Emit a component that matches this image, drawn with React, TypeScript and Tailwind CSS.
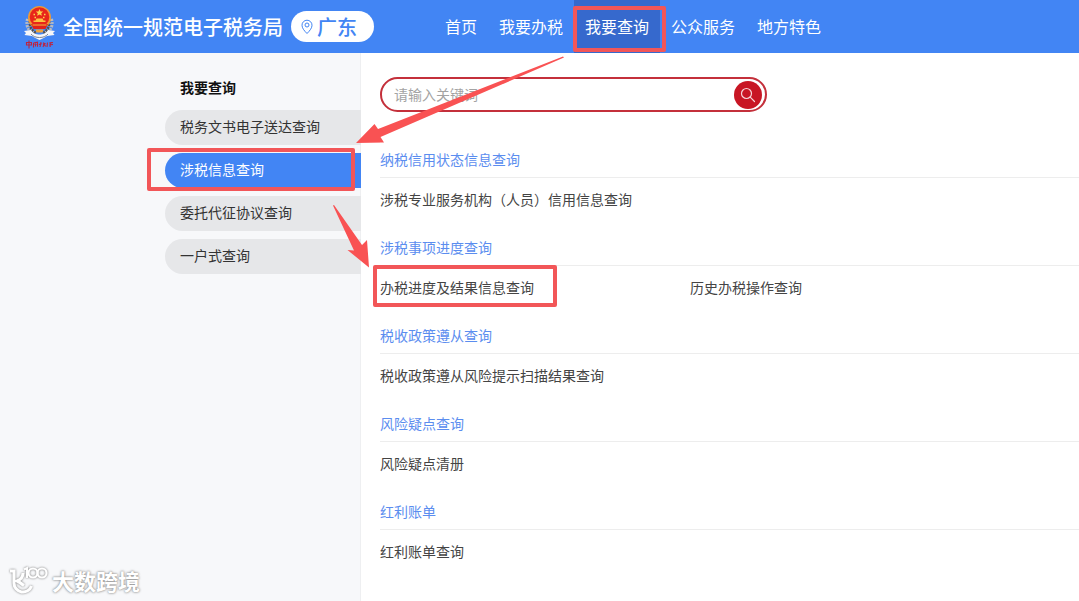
import clsx from "clsx";

const navItems = ["首页", "我要办税", "我要查询", "公众服务", "地方特色"];

const menuItems = ["税务文书电子送达查询", "涉税信息查询", "委托代征协议查询", "一户式查询"];

const sections = [
  { title: "纳税信用状态信息查询", links: ["涉税专业服务机构（人员）信用信息查询"] },
  { title: "涉税事项进度查询", links: ["办税进度及结果信息查询", "历史办税操作查询"] },
  { title: "税收政策遵从查询", links: ["税收政策遵从风险提示扫描结果查询"] },
  { title: "风险疑点查询", links: ["风险疑点清册"] },
  { title: "红利账单", links: ["红利账单查询"] },
];

function Emblem() {
  return (
    <svg width="32" height="44" viewBox="0 0 32 44" fill="none" className="shrink-0">
      <path d="M5 14c-2 7 1 12 7 15M28 14c2 7-1 12-7 15" stroke="#b9bbc0" strokeWidth="4" strokeDasharray="2 1" />
      <path d="M7 16c-1 6 2 10 6 12M26 16c1 6-2 10-6 12" stroke="#55504e" strokeWidth="2.500" strokeDasharray="2 1" />
      <circle cx="16.500" cy="12.500" r="11.500" fill="#f09a35" />
      <circle cx="16.500" cy="12" r="9.800" fill="#e8251a" />
      <path d="M16.500 4l1.100 2.400 2.600.2-2 1.700.7 2.500-2.400-1.300-2.400 1.300.7-2.500-2-1.700 2.600-.2z" fill="#fbd34b" />
      <path d="M10.500 9.500h1.500M21 9.500h1.500M11.500 12.500H13M20 12.500h1.500" stroke="#fbd34b" strokeWidth="1.400" />
      <path d="M10.500 17h12v-1.500h-2l-1-2h-6l-1 2h-2z" fill="#fbc33f" />
      <path d="M8 19h17l-2.500 5h-12z" fill="#e0211b" />
      <path d="M9.500 20h14" stroke="#f7bd3c" strokeWidth="1" />
      <path d="M12.500 24.500h8l-1 3h-6z" fill="#f0a338" />
      <path d="M1 26l7-1c2 3.500 5 4.500 8.500 4.500S23 28.500 25 25l7 1-2 2 1.500 2-7.500 1c-2 1.500-4.500 2.800-7.500 4-3-1.200-5.500-2.500-7.500-4l-7.500-1L3 28z" fill="#f6f6f8" />
      <path d="M8 29c2 2.500 5 3.500 8.500 3.500S23 31.500 25 29" stroke="#7d8597" strokeWidth="1" />
      <path
        d="M3.500 37.500h5v2.500h-5zM6 35.500v8M10.500 38v4.500M10.500 38l4-.8v4.500M11.500 39.500h2M12.500 38.500v3M18 37l-1 5M15.800 39.500l3-.8M20 37.800l2 1-2 .8M21 39.500l-1 2.500M21.500 39.500l1 2M24.500 37.500l-.5 4.500M26 38l4-.5M26 40l4-.5M28 37l-1 5"
        stroke="#bd2440"
        strokeWidth="1.100"
      />
    </svg>
  );
}

function PinIcon() {
  return (
    <svg width="12" height="16" viewBox="0 0 12 16" fill="none" stroke="currentColor" className="shrink-0">
      <path d="M6 14.500C3 11.500 1 9 1 6.200a5 5 0 0 1 10 0C11 9 9 11.500 6 14.500z" />
      <circle cx="6" cy="6" r="2" />
    </svg>
  );
}

function Header() {
  return (
    <header className="flex h-[53px] items-center bg-[#4285f4] pl-[23px] text-white">
      <Emblem />
      <h1 className="ml-2 text-[20px] leading-[30px] font-medium whitespace-nowrap">全国统一规范电子税务局</h1>
      <button className="ml-2 flex h-[31px] w-[83px] shrink-0 items-center gap-1 rounded-full bg-white pl-[10px] text-[20px] font-medium text-[#4285f4]">
        <PinIcon />
        广东
      </button>
      <nav className="ml-[60px] flex h-full">
        {navItems.map((item) => (
          <a
            key={item}
            href="#"
            className={clsx(
              "flex items-center px-[11px] pb-0.5 text-base whitespace-nowrap",
              item === "我要查询" && "bg-[#3669cd]"
            )}
          >
            {item}
          </a>
        ))}
      </nav>
    </header>
  );
}

function Sidebar() {
  return (
    <aside className="w-[361px] shrink-0 border-r border-[#eeeff1] bg-[#f7f8fa] pt-[23px] pl-[165px]">
      <h2 className="pl-[15px] text-sm leading-[22px] font-bold text-[#111]">我要查询</h2>
      <ul className="mt-3 -mr-px flex flex-col gap-2">
        {menuItems.map((item) => (
          <li key={item}>
            <a
              href="#"
              className={clsx(
                "flex h-[35px] items-center rounded-l-full pb-[3px] pl-[15px] text-sm",
                item === "涉税信息查询" ? "bg-[#4285f4] text-white" : "bg-[#e6e7e9] text-[#333]"
              )}
            >
              {item}
            </a>
          </li>
        ))}
      </ul>
    </aside>
  );
}

function SearchBox() {
  return (
    <form className="flex h-[35px] w-[387px] items-center rounded-full border-2 border-[#c4303b] pr-[3px] pl-3">
      <input
        type="text"
        aria-label="请输入关键词"
        placeholder="请输入关键词"
        className="min-w-0 flex-1 pb-0.5 text-sm outline-none placeholder:text-[#a3a3a3]"
      />
      <button
        type="button"
        aria-label="搜索"
        className="flex size-7 items-center justify-center rounded-full bg-[#c81624] text-[#f6d5d8]"
      >
        <svg width="16" height="16" viewBox="0 0 16 16" fill="none" stroke="currentColor" strokeWidth="1.200">
          <circle cx="6.500" cy="6.500" r="5" />
          <path d="M10.200 10.200L14.500 14.500" strokeLinecap="round" />
        </svg>
      </button>
    </form>
  );
}

// Red boxes and arrows that walk the reader through the menu
function Guides() {
  return (
    <svg width="700" height="320" className="pointer-events-none absolute top-0 left-0">
      <g fill="none" stroke="#f25658" strokeWidth="4" strokeLinejoin="round">
        <rect x="575" y="8" width="89" height="42" />
        <rect x="149" y="150" width="204" height="39" />
        <rect x="375" y="267" width="180" height="38" />
      </g>
      <g fill="#f95253">
        <path d="M563 56.500L378 129l-3.500-5L356 143l28-.5-3.500-5.500L564 57.500z" />
        <path d="M333 205.500l1-.5 28 40 5-5 2 27.500-21.500-17.500 6.500.5z" />
      </g>
    </svg>
  );
}

function Watermark() {
  return (
    <div className="absolute bottom-1 left-2 flex items-center gap-1 text-white">
      <svg
        width="40"
        height="30"
        viewBox="0 0 40 30"
        fill="none"
        stroke="currentColor"
        strokeWidth="3"
        className="drop-shadow-[0_0_1px_#777]"
      >
        <path d="M2 6h4v12a9 9 0 0 0 17.500 3" />
        <path d="M15 8c0 4-2 6.500-6 8 3 1 4.500 3 7 4.500" />
        <path d="M16 4.500l3-1.500v10" strokeWidth="2" />
        <circle cx="25" cy="8" r="4.500" strokeWidth="2.200" />
        <circle cx="34" cy="8" r="4.500" strokeWidth="2.200" />
      </svg>
      <span className="text-[22px] leading-[34px] font-bold [text-shadow:0_0_2px_#888,0_0_3px_#aaa]">大数跨境</span>
    </div>
  );
}

export default function App() {
  return (
    <div className="relative flex min-h-screen flex-col overflow-hidden bg-white font-['Noto_Sans_CJK_SC',sans-serif]">
      <Header />
      <div className="flex flex-1">
        <Sidebar />
        <main className="min-w-0 flex-1 pt-6 pl-[19px]">
          <SearchBox />
          <div className="mt-[30px]">
            {sections.map((section) => (
              <section key={section.title} className="h-[88px]">
                <h3 className="h-9 border-b border-[#ededed] pt-1.5 text-sm leading-[22px] text-[#5b8def]">
                  {section.title}
                </h3>
                <ul className="flex pt-[10px]">
                  {section.links.map((link) => (
                    <li key={link} className="w-[310px] text-sm leading-[22px] whitespace-nowrap text-[#444]">
                      <a href="#">{link}</a>
                    </li>
                  ))}
                </ul>
              </section>
            ))}
          </div>
        </main>
      </div>
      <Guides />
      <Watermark />
    </div>
  );
}
